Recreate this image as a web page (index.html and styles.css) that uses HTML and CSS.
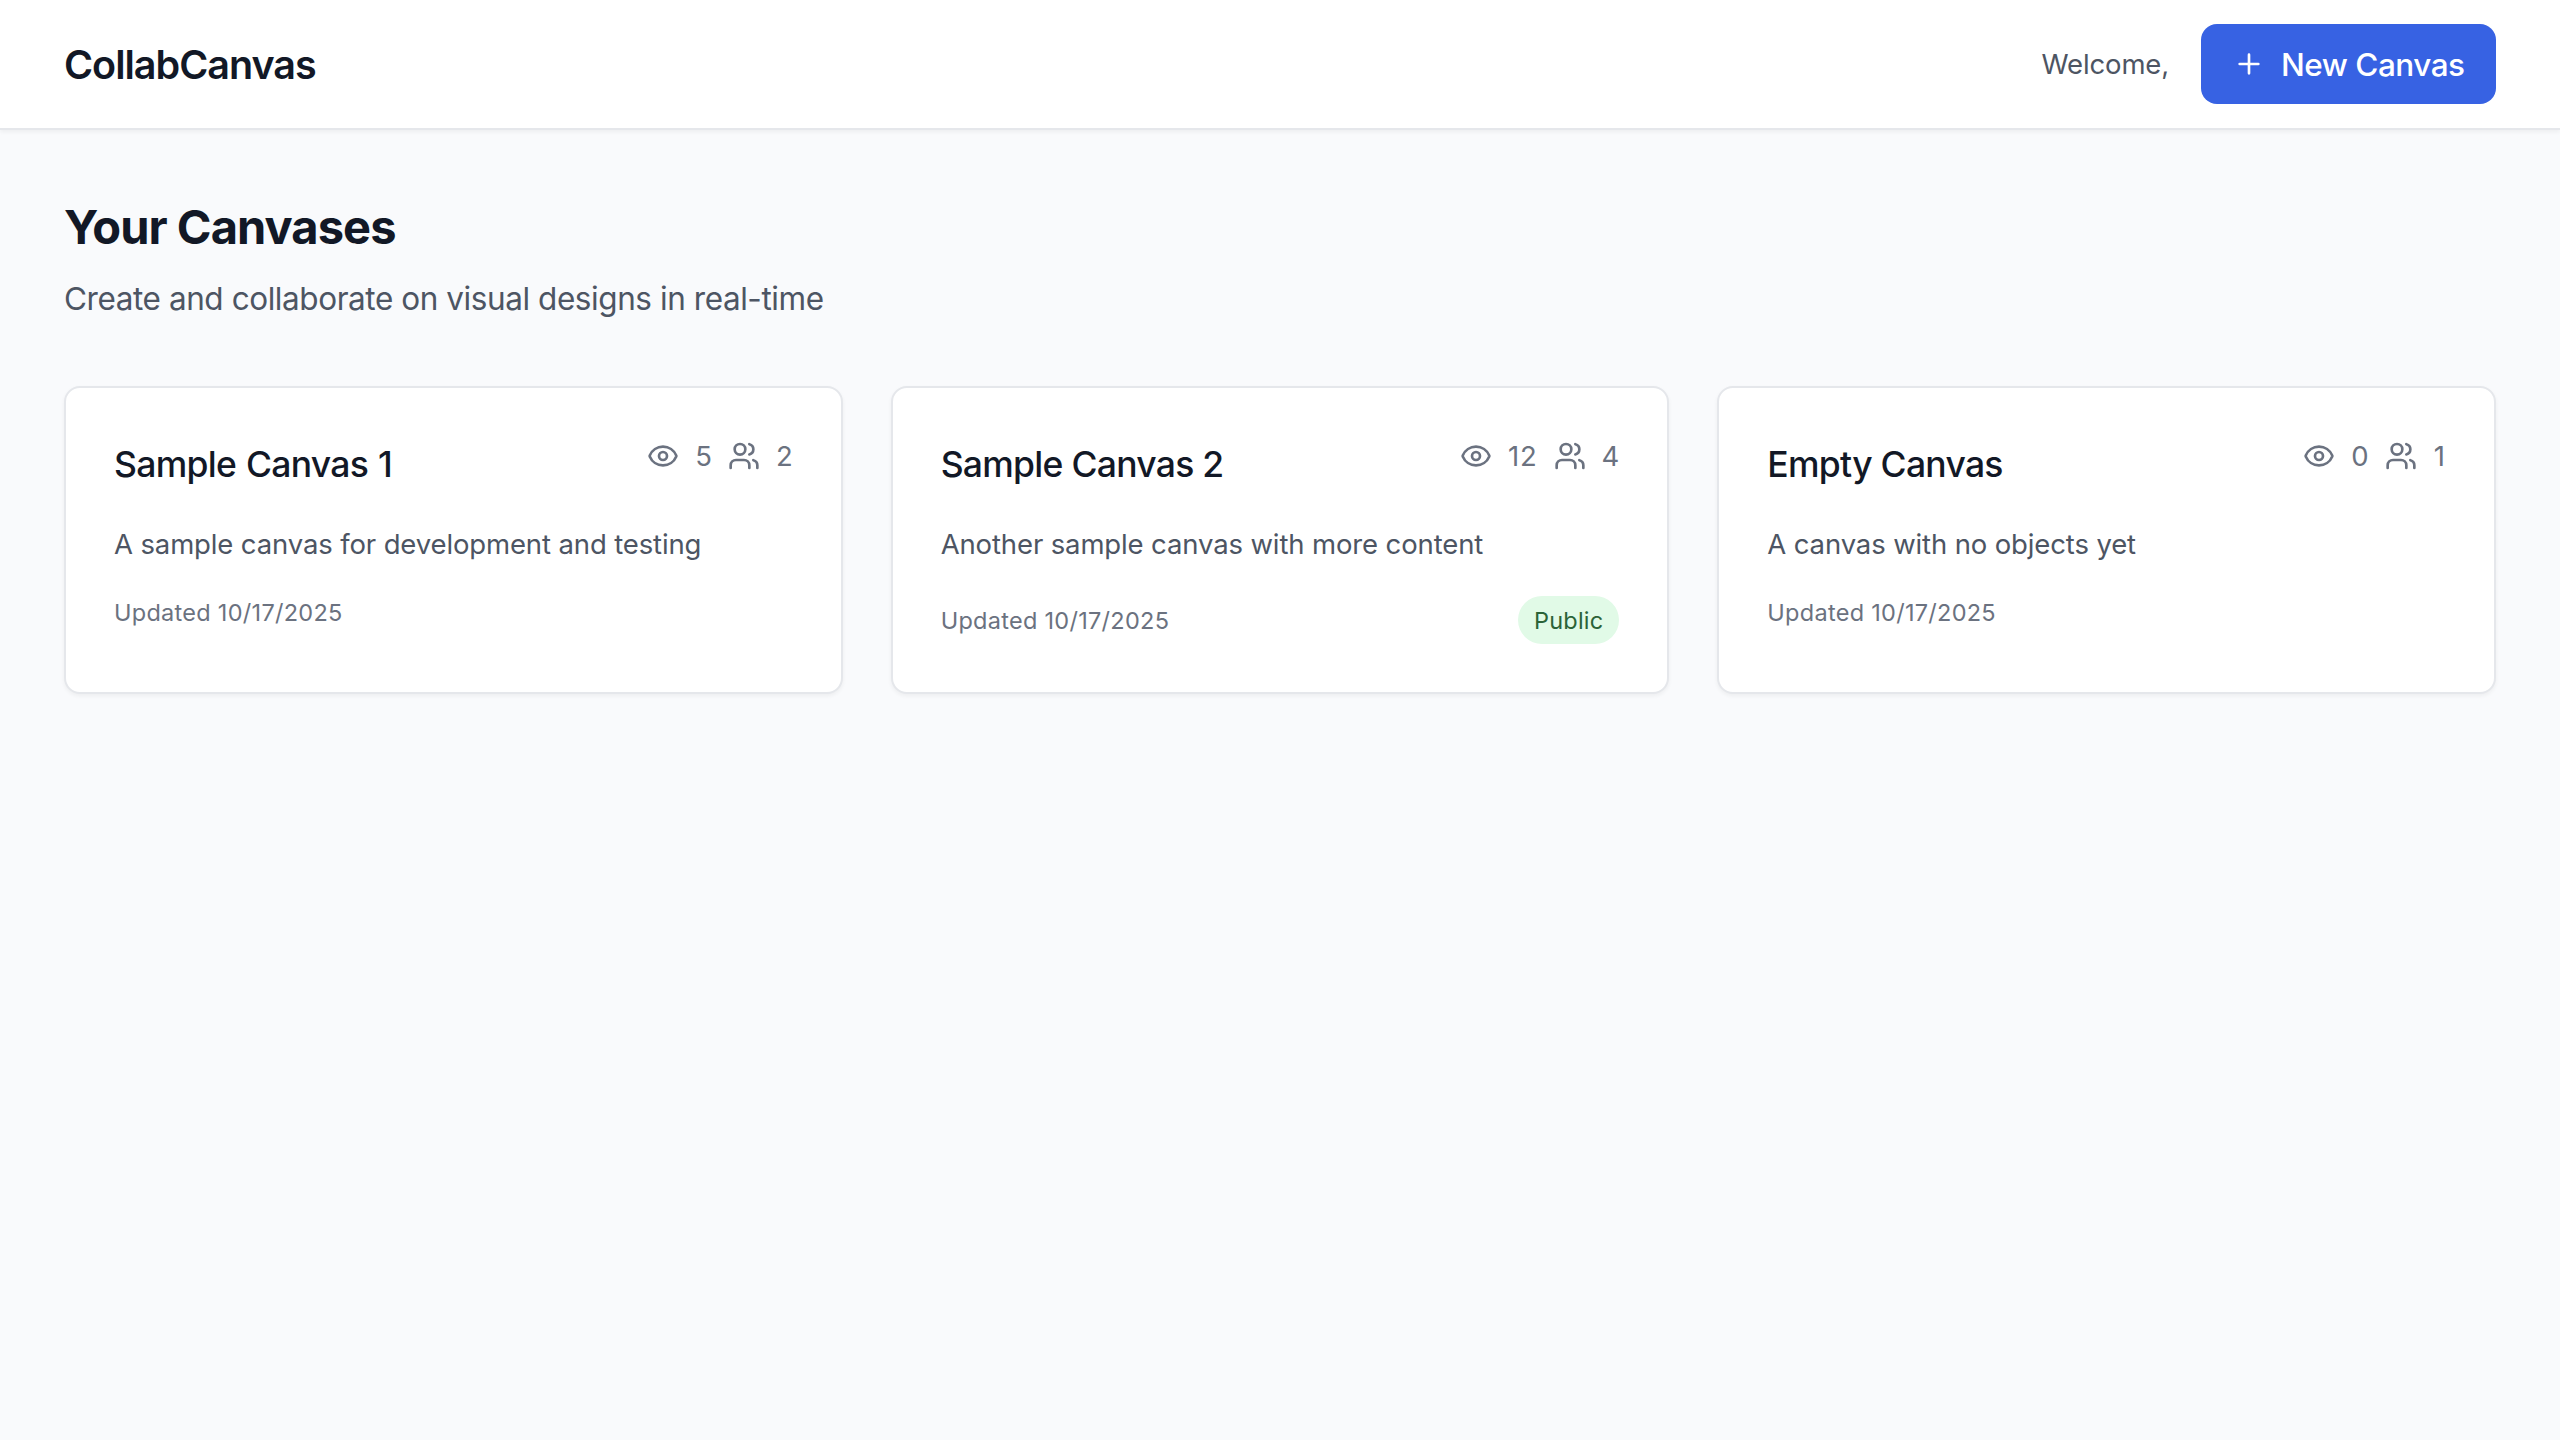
FILE: index.html
```
<!DOCTYPE html>
<html lang="en">
<head>
<meta charset="utf-8">
<title>CollabCanvas</title>
<link rel="stylesheet" href="styles.css">
</head>
<body>
<svg class="sprite" aria-hidden="true">
  <symbol id="eye" viewBox="0 0 24 24"><path d="M2.062 12.348a1 1 0 0 1 0-.696 10.75 10.75 0 0 1 19.876 0 1 1 0 0 1 0 .696 10.75 10.75 0 0 1-19.876 0"/><circle cx="12" cy="12" r="3"/></symbol>
  <symbol id="users" viewBox="0 0 24 24"><path d="M16 21v-2a4 4 0 0 0-4-4H6a4 4 0 0 0-4 4v2"/><circle cx="9" cy="7" r="4"/><path d="M22 21v-2a4 4 0 0 0-3-3.87"/><path d="M16 3.13a4 4 0 0 1 0 7.75"/></symbol>
  <symbol id="plus" viewBox="0 0 24 24"><path d="M5 12h14M12 5v14"/></symbol>
</svg>

<header class="header">
  <h1 class="brand">CollabCanvas</h1>
  <div class="header-actions">
    <span class="welcome">Welcome,</span>
    <button class="new-button" type="button">
      <svg class="icon"><use href="#plus"/></svg>
      <span class="new-label">New Canvas</span>
    </button>
  </div>
</header>

<main class="main">
  <h2 class="heading">Your Canvases</h2>
  <p class="subtitle">Create and collaborate on visual designs in real-time</p>

  <section class="grid">
    <article class="card">
      <div class="card-top">
        <h3 class="card-title card-title-wide">Sample Canvas 1</h3>
        <div class="stats">
          <svg class="icon"><use href="#eye"/></svg><span class="count">5</span>
          <svg class="icon"><use href="#users"/></svg><span class="count">2</span>
        </div>
      </div>
      <p class="description">A sample canvas for development and testing</p>
      <div class="card-footer"><span class="updated">Updated 10/17/2025</span></div>
    </article>

    <article class="card">
      <div class="card-top">
        <h3 class="card-title">Sample Canvas 2</h3>
        <div class="stats">
          <svg class="icon"><use href="#eye"/></svg><span class="count count-double">12</span>
          <svg class="icon"><use href="#users"/></svg><span class="count">4</span>
        </div>
      </div>
      <p class="description">Another sample canvas with more content</p>
      <div class="card-footer"><span class="updated">Updated 10/17/2025</span><span class="badge">Public</span></div>
    </article>

    <article class="card">
      <div class="card-top">
        <h3 class="card-title">Empty Canvas</h3>
        <div class="stats">
          <svg class="icon"><use href="#eye"/></svg><span class="count">0</span>
          <svg class="icon"><use href="#users"/></svg><span class="count">1</span>
        </div>
      </div>
      <p class="description">A canvas with no objects yet</p>
      <div class="card-footer"><span class="updated">Updated 10/17/2025</span></div>
    </article>
  </section>
</main>
</body>
</html>
```
FILE: styles.css
```
* { box-sizing: border-box; margin: 0; padding: 0; }

body {
  min-height: 100vh;
  background: #f9fafc;
  color: #121826;
  font-family: Inter, "Liberation Sans", sans-serif;
}

.sprite { display: none; }

.icon {
  display: block;
  flex: none;
  width: 32px;
  height: 32px;
  fill: none;
  stroke: currentColor;
  stroke-width: 2;
  stroke-linecap: round;
  stroke-linejoin: round;
}

.header {
  display: flex;
  align-items: center;
  justify-content: space-between;
  height: 130px;
  padding: 0 64px;
  background: #fff;
  border-bottom: 2px solid #e5e7eb;
  box-shadow: 0 2px 4px rgba(0, 0, 0, .05);
}

.brand {
  padding-top: 2px;
  font-size: 39.5px;
  font-weight: 600;
  line-height: 56px;
  letter-spacing: -1px;
}

.header-actions { display: flex; align-items: center; gap: 32px; }

.welcome {
  color: #4d5563;
  font-size: 27.5px;
  line-height: 40px;
  letter-spacing: -.15px;
}

.new-button {
  display: flex;
  align-items: center;
  gap: 16px;
  width: 295px;
  height: 80px;
  padding: 0 32px;
  border: 0;
  border-radius: 16px;
  background: #3762e3;
  color: #fff;
  font: inherit;
  white-space: nowrap;
}

.new-label {
  padding-top: 1px;
  font-size: 31.5px;
  font-weight: 500;
  line-height: 48px;
  letter-spacing: -.5px;
}

.main { padding: 64px; }

.heading {
  padding-top: 1px;
  font-size: 47px;
  font-weight: 700;
  line-height: 63px;
  letter-spacing: -.94px;
}

.subtitle {
  margin-top: 16px;
  padding-top: 1px;
  color: #4d5563;
  font-size: 31.5px;
  line-height: 47px;
  letter-spacing: -.43px;
}

.grid {
  display: grid;
  grid-template-columns: repeat(3, 1fr);
  gap: 48px;
  margin-top: 64px;
}

.card {
  padding: 48px;
  background: #fff;
  border: 2px solid #e5e7eb;
  border-radius: 16px;
  box-shadow: 0 2px 4px rgba(0, 0, 0, .05);
}

.card-top {
  display: flex;
  align-items: flex-start;
  justify-content: space-between;
}

.card-title {
  padding-top: 1px;
  font-size: 35.5px;
  font-weight: 500;
  line-height: 55px;
  letter-spacing: -.72px;
}

.card-title-wide { word-spacing: 1.2px; }

.stats {
  display: flex;
  align-items: center;
  gap: 16px;
  color: #6b7280;
}

.count {
  min-width: 13.3px;
  font-size: 27.5px;
  line-height: 40px;
  text-align: center;
}

.count-double { letter-spacing: .8px; }

.description {
  margin-top: 32px;
  color: #4d5563;
  font-size: 27.5px;
  line-height: 40px;
  letter-spacing: -.13px;
}

.card-footer {
  display: flex;
  align-items: center;
  justify-content: space-between;
  margin-top: 32px;
}

.updated {
  padding-top: 1px;
  color: #6b7280;
  font-size: 23.5px;
  line-height: 31px;
  letter-spacing: .28px;
}

.badge {
  padding: 9px 16px 8px;
  border-radius: 24px;
  background: #e1fae7;
  color: #2b6338;
  font-size: 23.5px;
  line-height: 31px;
  letter-spacing: .2px;
}
```
